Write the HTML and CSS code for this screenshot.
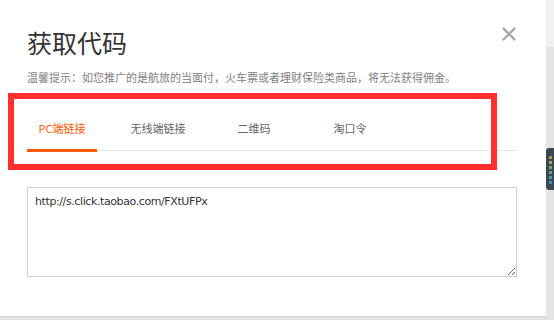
FILE: index.html
```html
<!DOCTYPE html>
<html>
<head>
<meta charset="utf-8">
<link rel="stylesheet" href="styles.css">
</head>
<body>
<div class="page">
  <div class="dialog">
    <div class="close" aria-label="close">
      <svg width="14" height="14" viewBox="0 0 14 14"><path d="M1.5 1.5 L12.5 12.5 M12.5 1.5 L1.5 12.5" stroke="#a8a8a8" stroke-width="2.4" stroke-linecap="round"/></svg>
    </div>
    <h1 class="title">获取代码</h1>
    <p class="tip">温馨提示：如您推广的是航旅的当面付，火车票或者理财保险类商品，将无法获得佣金。</p>
    <div class="tabs">
      <div class="tab active">PC端链接</div>
      <div class="tab">无线端链接</div>
      <div class="tab">二维码</div>
      <div class="tab">淘口令</div>
    </div>
    <textarea class="code">http://s.click.taobao.com/FXtUFPx</textarea>
    <div class="mark"></div>
  </div>
  <div class="strip">
    <div class="strip-top"></div>
    <div class="widget">
      <span class="dot d1"></span><span class="dot d2"></span><span class="dot d3"></span><span class="dot d4"></span><span class="dot d5"></span><span class="dot d6"></span>
    </div>
  </div>
</div>
</body>
</html>
```

FILE: styles.css
```css
html, body {
  margin: 0;
  padding: 0;
}
body {
  width: 554px;
  height: 320px;
  overflow: hidden;
  background: #e2e2e2;
  font-family: "Noto Sans CJK SC", "Noto Sans", sans-serif;
}
.page {
  display: flex;
  align-items: flex-start;
  height: 320px;
}
.dialog {
  position: relative;
  width: 546px;
  height: 317px;
  box-sizing: border-box;
  padding: 26px 29px 0 27px;
  background: #fff;
  border-bottom: 1px solid #cfcfcf;
}
.close {
  position: absolute;
  top: 27px;
  right: 30px;
  width: 14px;
  height: 14px;
}
.close svg { display: block; }
.title {
  margin: 0;
  font-size: 25px;
  line-height: 32px;
  font-weight: normal;
  color: #333;
}
.tip {
  margin: 10px 0 0;
  font-size: 11px;
  line-height: 18px;
  color: #808080;
}
.tabs {
  display: flex;
  gap: 26px;
  margin-top: 14px;
  border-bottom: 1px solid #e6e6e6;
}
.tab {
  width: 70px;
  text-align: center;
  padding: 18px 0 11px;
  font-size: 11px;
  line-height: 20px;
  color: #666;
  border-bottom: 3px solid transparent;
  margin-bottom: -2px;
}
.tab.active {
  color: #ff5a00;
  border-bottom-color: #ff5a00;
}
.code {
  display: block;
  box-sizing: border-box;
  width: 490px;
  height: 90px;
  margin: 36px 0 0;
  padding: 6px 7px;
  border: 1px solid #d2d2d2;
  border-radius: 0;
  font-family: "DejaVu Sans", sans-serif;
  font-size: 11px;
  letter-spacing: -0.4px;
  line-height: 16px;
  color: #333;
  background: #fff;
  resize: both;
  outline: none;
}
.mark {
  position: absolute;
  left: 8px;
  top: 93px;
  width: 489px;
  height: 77px;
  box-sizing: border-box;
  border: 6px solid #ff2f2f;
  pointer-events: none;
}
.strip {
  width: 8px;
  height: 320px;
  background: #e4e4e4;
  display: flex;
  flex-direction: column;
}
.strip-top {
  height: 47px;
  background: #f1f1f1;
}
.widget {
  margin-top: 101px;
  height: 42px;
  background: #3c4754;
  border-radius: 3px 0 0 3px;
  display: flex;
  flex-direction: column;
  align-items: center;
  padding-top: 8px;
  box-sizing: border-box;
  gap: 2px;
}
.dot {
  display: block;
  width: 3px;
  height: 3px;
}
.d1 { background: #b89a4a; }
.d2 { background: #a9a84e; }
.d3 { background: #86a85a; }
.d4 { background: #62a486; }
.d5 { background: #4e9aa0; }
.d6 { background: #4a88a8; }
```
